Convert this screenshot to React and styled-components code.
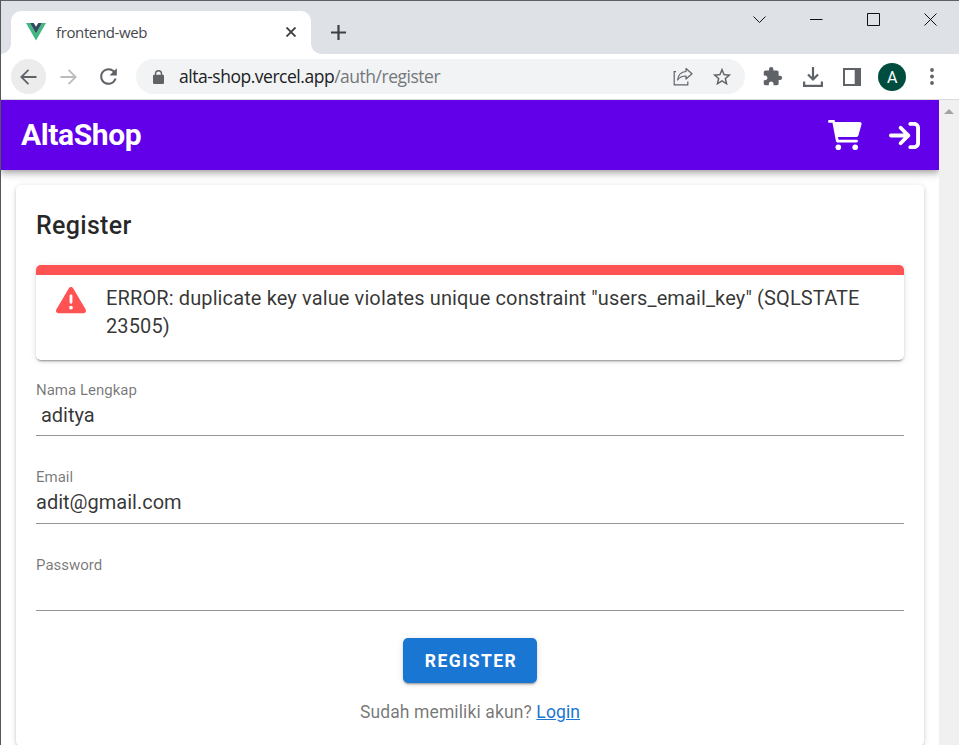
import React from "react";
import styled, { createGlobalStyle } from "styled-components";
import { FaArrowRightToBracket, FaTriangleExclamation } from "react-icons/fa6";
import { MdRefresh, MdStarBorder, MdExtension } from "react-icons/md";

const GlobalStyle = createGlobalStyle`
  *, *::before, *::after { box-sizing: border-box; }
  html, body { margin: 0; padding: 0; overflow: hidden; }
  svg { display: block; flex: none; }
`;

const Window = styled.div`
  display: flex;
  flex-direction: column;
  width: 959px;
  height: 745px;
  overflow: hidden;
  border-top: 1px solid #5f6063;
  border-left: 1px solid #55565a;
  background: #fff;
  font-family: Roboto, sans-serif;
`;

const TabStrip = styled.div`
  display: flex;
  flex: none;
  height: 53px;
  padding-left: 10px;
  background: #dee1e6;
`;

const Tab = styled.div`
  position: relative;
  display: flex;
  align-items: center;
  width: 300px;
  height: 43px;
  margin-top: 10px;
  padding: 0 15px 1px 15px;
  border-radius: 10px 10px 0 0;
  background: #fff;
  &::before,
  &::after {
    content: "";
    position: absolute;
    bottom: 0;
    width: 10px;
    height: 10px;
  }
  &::before {
    left: -10px;
    background: radial-gradient(circle at 0 0, transparent 9.5px, #fff 10px);
  }
  &::after {
    right: -10px;
    background: radial-gradient(circle at 100% 0, transparent 9.5px, #fff 10px);
  }
`;

const TabTitle = styled.span`
  flex: 1;
  margin-left: 10px;
  color: #45494d;
  font: 15px/20px "Open Sans", sans-serif;
  letter-spacing: -0.38px;
`;

const NewTab = styled.div`
  display: flex;
  align-items: center;
  margin: 10px 0 0 20px;
`;

const WindowControls = styled.div`
  display: flex;
  gap: 44px;
  margin: 12px 22px 0 auto;
  height: 14px;
`;

const Toolbar = styled.div`
  display: flex;
  flex: none;
  align-items: center;
  height: 46px;
  padding: 0 25px 0 10px;
  border-bottom: 1px solid #d8dade;
  color: #5f6368;
`;

const NavButton = styled.div`
  display: flex;
  align-items: center;
  justify-content: center;
  width: 35px;
  height: 35px;
  margin-right: ${(p) => p.$gap || 5}px;
  border-radius: 50%;
  background: ${(p) => (p.$active ? "#ececed" : "transparent")};
  color: ${(p) => (p.$disabled ? "#babcbe" : "#5f6368")};
`;

const AddressBar = styled.div`
  display: flex;
  flex: none;
  align-items: center;
  width: 609px;
  height: 35px;
  padding: 0 12px 0 17px;
  border-radius: 18px;
  background: #f1f3f4;
`;

const Url = styled.span`
  flex: 1;
  margin: -1px 0 0 15px;
  color: #202124;
  font: 17.5px/24px "Open Sans", sans-serif;
  letter-spacing: -0.48px;
  white-space: nowrap;
`;

const UrlPath = styled.span`
  color: #74787c;
`;

const AddressActions = styled.div`
  display: flex;
  align-items: center;
  gap: 18px;
`;

const Actions = styled.div`
  display: flex;
  flex: 1;
  align-items: center;
  justify-content: space-between;
  margin-left: 17px;
`;

const Avatar = styled.div`
  width: 28px;
  height: 28px;
  margin: 0 4px 0 -2px;
  border-radius: 50%;
  background: #004d40;
  color: #fff;
  font: 16px/29px Roboto, sans-serif;
  text-align: center;
`;

const Viewport = styled.div`
  display: flex;
  flex: 1;
  min-height: 0;
`;

const Page = styled.div`
  display: flex;
  flex: 1;
  flex-direction: column;
  overflow: hidden;
  background: #fff;
`;

const Scrollbar = styled.div`
  display: flex;
  justify-content: center;
  width: 20px;
  padding-top: 9px;
  background: #f0f0f0;
`;

const AppBar = styled.header`
  display: flex;
  flex: none;
  align-items: center;
  justify-content: space-between;
  height: 70px;
  padding: 0 19px 0 20px;
  background: #6200ea;
  color: #fff;
  box-shadow: 0 2px 5px -1px rgba(0, 0, 0, 0.2), 0 5px 6px rgba(0, 0, 0, 0.14),
    0 1px 12px rgba(0, 0, 0, 0.12);
`;

const Brand = styled.div`
  font: 700 30px/40px Roboto, sans-serif;
  letter-spacing: -0.38px;
`;

const BarActions = styled.div`
  display: flex;
  gap: 27px;
`;

const Card = styled.main`
  display: flex;
  flex: none;
  flex-direction: column;
  height: 561px;
  margin: 15px 15px 0;
  padding: 21px 20px 0;
  border-radius: 5px;
  background: #fff;
  box-shadow: 0 4px 1px -2px rgba(0, 0, 0, 0.2), 0 2px 3px rgba(0, 0, 0, 0.14),
    0 1px 6px rgba(0, 0, 0, 0.12);
`;

const Heading = styled.h1`
  margin: 0 0 19px;
  color: rgba(0, 0, 0, 0.85);
  font: 500 25px/40px Roboto, sans-serif;
  letter-spacing: 0.31px;
`;

const Alert = styled.div`
  display: flex;
  flex: none;
  align-items: flex-start;
  height: 95px;
  padding: 9px 20px;
  border-top: 10px solid #ff5252;
  border-radius: 5px;
  background: #fff;
  color: #ff5252;
  box-shadow: 0 3px 1px -2px rgba(0, 0, 0, 0.2), 0 2px 2px rgba(0, 0, 0, 0.14),
    0 1px 6px rgba(0, 0, 0, 0.12);
  svg {
    margin: 1px 20px 0 0;
  }
`;

const AlertText = styled.p`
  margin: 0;
  color: rgba(0, 0, 0, 0.8);
  font: 20px/28px Roboto, sans-serif;
  letter-spacing: 0.12px;
`;

const Field = styled.label`
  display: flex;
  flex: none;
  flex-direction: column;
  height: ${(p) => p.$height || 57}px;
  margin-top: ${(p) => p.$top || 31}px;
  border-bottom: 1px solid #949494;
`;

const FieldLabel = styled.span`
  color: rgba(0, 0, 0, 0.54);
  font: 15px/20px Roboto, sans-serif;
`;

const FieldValue = styled.span`
  color: rgba(0, 0, 0, 0.8);
  font: 20px/25px Roboto, sans-serif;
  margin-top: 3px;
  white-space: pre;
`;

const SubmitButton = styled.button`
  flex: none;
  align-self: center;
  width: 134px;
  height: 45px;
  margin-top: 27px;
  padding: 0 0 0 2px;
  border: 0;
  border-radius: 5px;
  background: #1976d2;
  color: #fff;
  font: 700 17.5px/47px Roboto, sans-serif;
  letter-spacing: 1.45px;
  box-shadow: 0 3px 1px -2px rgba(0, 0, 0, 0.2), 0 2px 2px rgba(0, 0, 0, 0.14),
    0 1px 6px rgba(0, 0, 0, 0.12);
`;

const LoginHint = styled.p`
  margin: 17px 0 0;
  color: rgba(0, 0, 0, 0.55);
  font: 17.5px/25px Roboto, sans-serif;
  letter-spacing: 0.12px;
  text-align: center;
`;

const LoginLink = styled.a`
  color: #1976d2;
  text-decoration: underline;
`;

const VueLogo = () => (
  <svg width="20" height="18" viewBox="0 0 20 18">
    <path fill="#41b883" d="M0 0h4l6 10.4L16 0h4L10 17.5z" />
    <path fill="#35495e" d="M4 0h3.8L10 3.8 12.2 0H16l-6 10.4z" />
  </svg>
);

const CloseIcon = () => (
  <svg width="10" height="10" viewBox="0 0 10 10" stroke="#3c4043" strokeWidth="1.9">
    <path d="M.5.5l9 9M9.5.5l-9 9" />
  </svg>
);

const PlusIcon = () => (
  <svg width="15" height="15" viewBox="0 0 15 15" stroke="#3c4043" strokeWidth="2.2">
    <path d="M7.5 0v15M0 7.5h15" />
  </svg>
);

const ControlIcon = ({ d }) => (
  <svg width="13" height="13" viewBox="0 0 13 13" fill="none" stroke="#111" strokeWidth="1">
    <path d={d} />
  </svg>
);

const ArrowIcon = ({ d }) => (
  <svg width="17" height="16" viewBox="0 0 17 16" fill="none" stroke="currentColor" strokeWidth="1.8">
    <path d={d} />
  </svg>
);

const LockIcon = () => (
  <svg width="11" height="14" viewBox="0 0 11 14">
    <rect y="4.8" width="11" height="9.2" rx="1.2" fill="#5f6368" />
    <path d="M2.500 5.500V3.700a3 3 0 0 1 6 0v1.800" fill="none" stroke="#5f6368" strokeWidth="1.4" />
  </svg>
);

const ShareIcon = () => (
  <svg width="20" height="19" viewBox="0 0 20 19" fill="none" stroke="#5f6368" strokeWidth="1.2">
    <path d="M3 4.600H1.200v13.200h13.600V14.500" />
    <path strokeLinejoin="round" d="M13 1.500l6 5.200-6 5.300V9C9 9 6.500 10 4.600 13 5 8.500 7.500 5 13 4.500z" />
  </svg>
);

const DownloadIcon = () => (
  <svg width="20" height="20" viewBox="0 0 20 20" fill="none" stroke="#5f6368" strokeWidth="2.200">
    <path d="M10 0v12M5 7.500l5 5 5-5M1.100 14.500v4.400h17.800v-4.400" />
  </svg>
);

const SidePanelIcon = () => (
  <svg width="18" height="18" viewBox="0 0 18 18">
    <path fill="#5f6368" fillRule="evenodd" d="M0 0h18v18H0zM2 2v14h9.700V2z" />
  </svg>
);

const MenuIcon = () => (
  <svg width="4" height="17" viewBox="0 0 4 17" fill="#5f6368">
    <circle cx="2" cy="2" r="1.900" />
    <circle cx="2" cy="8.500" r="1.900" />
    <circle cx="2" cy="15" r="1.900" />
  </svg>
);

const CartIcon = () => (
  <svg width="33.750" height="30" viewBox="0 0 576 512" fill="#fff">
    <path d="M96 0C107.5 0 117.6 8.190 119.800 19.510L121.100 32H541.800C562.100 32 578.300 52.250 572.600 72.660L518.600 264.700C514.700 278.500 502.100 288 487.800 288H170.700L179.900 336H488C501.300 336 512 346.700 512 360C512 373.300 501.300 384 488 384H159.100C148.500 384 138.400 375.800 136.200 364.500L76.140 48H24C10.750 48 0 37.250 0 24C0 10.750 10.750 0 24 0H96z" />
    <circle cx="176" cy="464" r="48" />
    <circle cx="464" cy="464" r="48" />
  </svg>
);

const ScrollUpIcon = () => (
  <svg width="10" height="5" viewBox="0 0 10 5" fill="#a3a3a3">
    <path d="M0 5l5-5 5 5z" />
  </svg>
);

export default function App() {
  return (
    <Window>
      <GlobalStyle />
      <TabStrip>
        <Tab>
          <VueLogo />
          <TabTitle>frontend-web</TabTitle>
          <CloseIcon />
        </Tab>
        <NewTab>
          <PlusIcon />
        </NewTab>
        <WindowControls>
          <ControlIcon d="M.5 3.500l6 6 6-6" />
          <ControlIcon d="M0 6.500h12.500" />
          <ControlIcon d="M.5.5h12v12H.5z" />
          <ControlIcon d="M.5.5l12 12M12.500.5l-12 12" />
        </WindowControls>
      </TabStrip>

      <Toolbar>
        <NavButton $active>
          <ArrowIcon d="M16.500 8H1.800M8.500 .8L1.300 8l7.200 7.200" />
        </NavButton>
        <NavButton $disabled>
          <ArrowIcon d="M.5 8h14.700M8.500 .8L15.700 8l-7.200 7.200" />
        </NavButton>
        <NavButton $gap={10}>
          <MdRefresh size={25} />
        </NavButton>
        <AddressBar>
          <LockIcon />
          <Url>
            alta-shop.vercel.app<UrlPath>/auth/register</UrlPath>
          </Url>
          <AddressActions>
            <ShareIcon />
            <MdStarBorder size={22} />
          </AddressActions>
        </AddressBar>
        <Actions>
          <MdExtension size={21} />
          <DownloadIcon />
          <SidePanelIcon />
          <Avatar>A</Avatar>
          <MenuIcon />
        </Actions>
      </Toolbar>

      <Viewport>
        <Page>
          <AppBar>
            <Brand>AltaShop</Brand>
            <BarActions>
              <CartIcon />
              <FaArrowRightToBracket size={31} />
            </BarActions>
          </AppBar>
          <Card>
            <Heading>Register</Heading>
            <Alert>
              <FaTriangleExclamation size={30} />
              <AlertText>
                ERROR: duplicate key value violates unique constraint "users_email_key" (SQLSTATE
                23505)
              </AlertText>
            </Alert>
            <Field $top={20} $height={56}>
              <FieldLabel>Nama Lengkap</FieldLabel>
              <FieldValue>{" aditya"}</FieldValue>
            </Field>
            <Field>
              <FieldLabel>Email</FieldLabel>
              <FieldValue>adit@gmail.com</FieldValue>
            </Field>
            <Field $height={56}>
              <FieldLabel>Password</FieldLabel>
            </Field>
            <SubmitButton>REGISTER</SubmitButton>
            <LoginHint>
              Sudah memiliki akun? <LoginLink>Login</LoginLink>
            </LoginHint>
          </Card>
        </Page>
        <Scrollbar>
          <ScrollUpIcon />
        </Scrollbar>
      </Viewport>
    </Window>
  );
}
